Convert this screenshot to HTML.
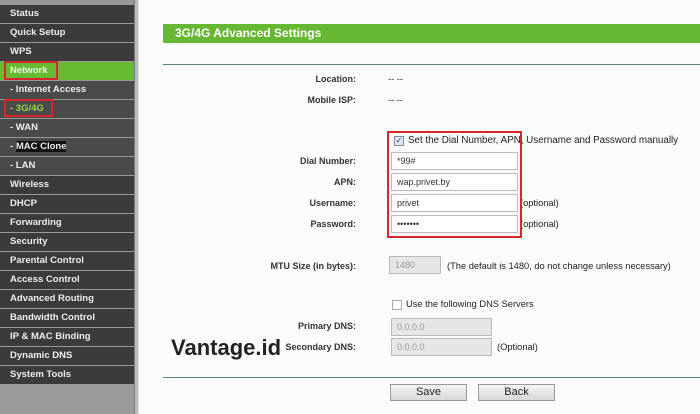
<!DOCTYPE html>
<html><head><style>
*{margin:0;padding:0;box-sizing:border-box}
body{width:700px;height:414px;background:#fbfbfb;font-family:"Liberation Sans",sans-serif;position:relative;overflow:hidden}
#side{position:absolute;left:0;top:0;width:134px;height:414px;background:#9a9a9a}
#edge{position:absolute;left:134px;top:0;width:5px;height:414px;background:#bdbdbd;border-left:1px solid #777;border-right:1px solid #ddd}
.m{position:absolute;left:0;width:134px;height:18px;background:#3b3b3b;color:#eee;font-size:9.5px;font-weight:bold;line-height:18px;padding-left:10px}
.m.s{background:#4a4a4a}
.a{position:absolute;font-size:9.3px;color:#222}
.l{position:absolute;right:344px;font-size:9px;font-weight:bold;color:#333;text-align:right}
.in{position:absolute;left:391px;width:127px;height:18px;border:1px solid #bbb;background:#fff;font-size:9px;line-height:16px;padding-left:5px;color:#333}
.g{background:#e6e6e6;color:#999}
.btn{position:absolute;top:384px;width:77px;height:17px;border:1px solid #999;background:linear-gradient(#f4f4f4,#d8d8d8);font-size:11px;text-align:center;line-height:15px;color:#222}
</style></head><body>
<div id="side"></div><div id="edge"></div>
<div class="m" style="top:5px">Status</div>
<div class="m" style="top:24px">Quick Setup</div>
<div class="m" style="top:43px">WPS</div>
<div class="m" style="top:62px;background:#66bb33">Network</div>
<div style="position:absolute;left:4px;top:61px;width:54px;height:19px;border:2px solid #d9252f"></div>
<div class="m s" style="top:81px">- Internet Access</div>
<div class="m s" style="top:100px;color:#9ad24a">- 3G/4G</div>
<div style="position:absolute;left:4px;top:99px;width:49px;height:18px;border:2px solid #d9252f"></div>
<div class="m s" style="top:119px">- WAN</div>
<div class="m s" style="top:138px">- <span style="background:#111">MAC Clone</span></div>
<div class="m s" style="top:157px">- LAN</div>
<div class="m" style="top:176px">Wireless</div>
<div class="m" style="top:195px">DHCP</div>
<div class="m" style="top:214px">Forwarding</div>
<div class="m" style="top:233px">Security</div>
<div class="m" style="top:252px">Parental Control</div>
<div class="m" style="top:271px">Access Control</div>
<div class="m" style="top:290px">Advanced Routing</div>
<div class="m" style="top:309px">Bandwidth Control</div>
<div class="m" style="top:328px">IP &amp; MAC Binding</div>
<div class="m" style="top:347px">Dynamic DNS</div>
<div class="m" style="top:366px">System Tools</div>

<div style="position:absolute;left:163px;top:24px;width:537px;height:19px;background:#66b832;color:#fff;font-weight:bold;font-size:12px;line-height:19px;padding-left:12px">3G/4G Advanced Settings</div>
<div style="position:absolute;left:163px;top:64px;width:537px;height:1px;background:#5a8a74"></div>

<div class="l" style="top:74px">Location:</div><div class="a" style="left:388px;top:74px">-- --</div>
<div class="l" style="top:95px">Mobile ISP:</div><div class="a" style="left:388px;top:95px">-- --</div>

<div style="position:absolute;left:394px;top:136px;width:10px;height:10px;border:1px solid #889;background:#dde6f5;font-size:8px;line-height:8px;color:#336;text-align:center">✓</div>
<div class="a" style="left:408px;top:135px;font-size:9.8px">Set the Dial Number, APN, Username and Password manually</div>
<div class="l" style="top:156px">Dial Number:</div><div class="in" style="top:152px">*99#</div>
<div class="l" style="top:177px">APN:</div><div class="in" style="top:173px">wap.privet.by</div>
<div class="l" style="top:198px">Username:</div><div class="in" style="top:194px">privet</div><div class="a" style="left:520px;top:198px">(optional)</div>
<div class="l" style="top:219px">Password:</div><div class="in" style="top:215px">•••••••</div><div class="a" style="left:520px;top:219px">(optional)</div>
<div style="position:absolute;left:387px;top:131px;width:135px;height:107px;border:2px solid #d9252f"></div>

<div class="l" style="top:261px">MTU Size (in bytes):</div>
<div class="in g" style="top:256px;left:389px;width:52px">1480</div>
<div class="a" style="left:447px;top:261px">(The default is 1480, do not change unless necessary)</div>

<div style="position:absolute;left:392px;top:300px;width:10px;height:10px;border:1px solid #aaa;background:#fff"></div>
<div class="a" style="left:406px;top:299px">Use the following DNS Servers</div>
<div class="l" style="top:321px">Primary DNS:</div><div class="in g" style="top:318px;width:101px">0.0.0.0</div>
<div class="l" style="top:342px">Secondary DNS:</div><div class="in g" style="top:338px;width:101px">0.0.0.0</div>
<div class="a" style="left:497px;top:342px">(Optional)</div>
<div style="position:absolute;left:171px;top:335px;font-size:22px;font-weight:bold;color:#222">Vantage.id</div>
<div style="position:absolute;left:163px;top:377px;width:537px;height:1px;background:#5a8a74"></div>
<div class="btn" style="left:390px">Save</div>
<div class="btn" style="left:478px">Back</div>
</body></html>
